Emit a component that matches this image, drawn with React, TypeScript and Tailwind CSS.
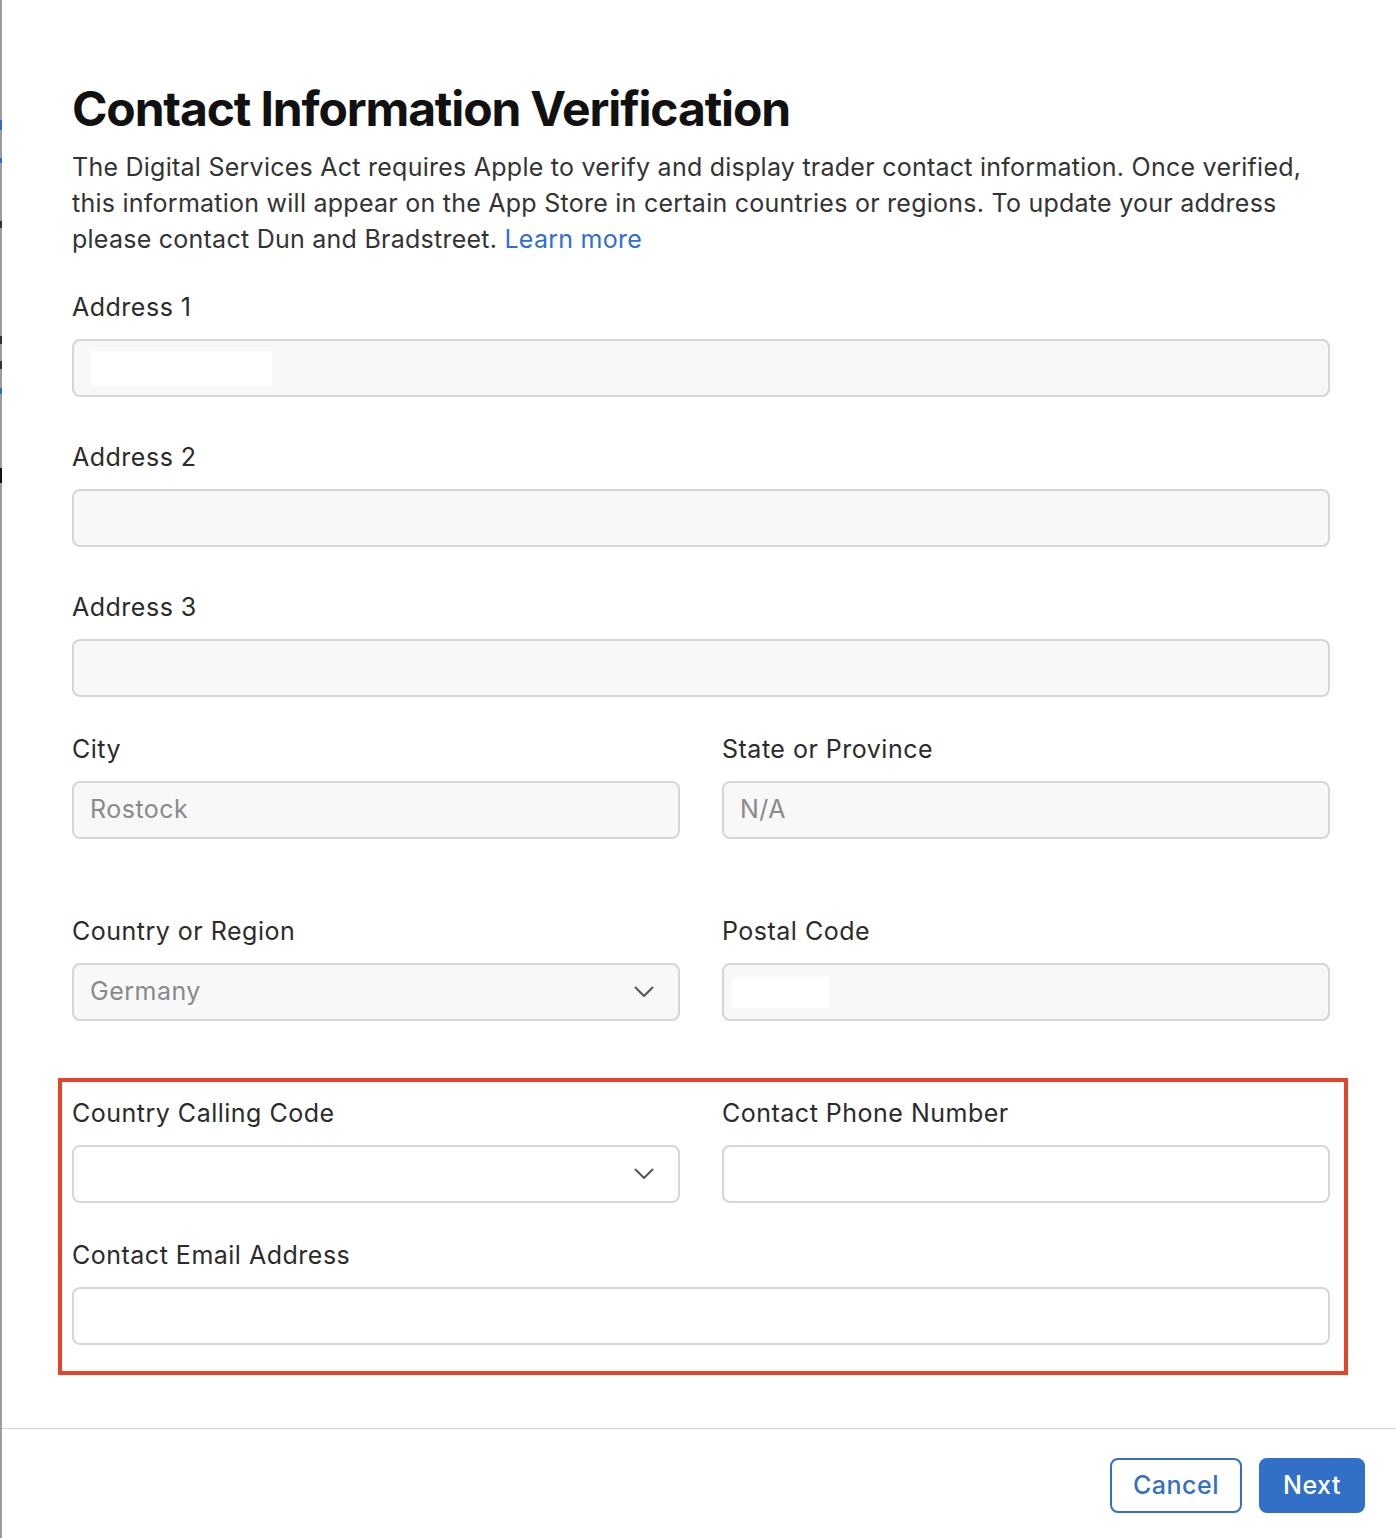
const font = { fontFamily: 'Inter, "Liberation Sans", sans-serif' };

type FieldProps = {
  label: string;
  value?: string;
  disabled?: boolean;
  select?: boolean;
  redact?: string;
  className?: string;
};

function Chevron() {
  return (
    <svg width="20" height="12" viewBox="0 0 20 12" fill="none" className="shrink-0">
      <path d="M1.5 1.5 L10 10 L18.5 1.5" stroke="#555" strokeWidth={2} strokeLinecap="round" strokeLinejoin="round" />
    </svg>
  );
}

function Field({ label, value, disabled, select, redact, className = '' }: FieldProps) {
  return (
    <div className={className}>
      <div className="text-[25px] leading-[32px] tracking-[0.02em] text-[#2b2b2b]">{label}</div>
      <div
        className={`mt-4 flex h-[58px] items-center rounded-[8px] border-2 border-[#d6d6d6] pl-4 pr-6 ${
          disabled ? 'bg-[#f8f8f8]' : 'bg-white'
        }`}
      >
        <div className="flex-1 text-[25px] tracking-[0.02em] text-[#8a8a8a]">
          {value}
          {redact && <div className={`bg-white ${redact}`} />}
        </div>
        {select && <Chevron />}
      </div>
    </div>
  );
}

export default function App() {
  return (
    <div className="flex h-[1538px] w-full bg-white" style={font}>
      <div className="flex w-[2px] flex-col bg-[#9c9c9c]">
        <div className="h-[120px]" />
        <div className="h-[10px] bg-[#2f6fc4]" />
        <div className="h-[28px]" />
        <div className="h-[5px] bg-[#2f6fc4]" />
        <div className="h-[58px]" />
        <div className="h-[7px] bg-[#333]" />
        <div className="h-[108px]" />
        <div className="h-[8px] bg-[#333]" />
        <div className="h-[17px]" />
        <div className="h-[8px] bg-[#333]" />
        <div className="h-[19px]" />
        <div className="h-[6px] bg-[#2f6fc4]" />
        <div className="h-[74px]" />
        <div className="h-[15px] bg-[#111]" />
      </div>

      <div className="flex flex-1 flex-col">
        <div className="pl-[70px] pr-[66px]">
          <h1 className="mt-[85px] text-[48px] font-bold leading-[48px] tracking-[-0.024em] text-[#111]">
            Contact Information Verification
          </h1>
          <p className="mt-4 text-[25px] leading-[36px] tracking-[0.01em] text-[#333]">
            The Digital Services Act requires Apple to verify and display trader contact information. Once verified,
            this information will appear on the App Store in certain countries or regions. To update your address
            please contact Dun and Bradstreet. <span className="text-[#2f6fcf]">Learn more</span>
          </p>

          <Field className="mt-[34px]" label="Address 1" disabled redact="h-[35px] w-[182px]" />
          <Field className="mt-[44px]" label="Address 2" disabled />
          <Field className="mt-[44px]" label="Address 3" disabled />

          <div className="mt-9 grid grid-cols-2 gap-x-[42px]">
            <Field label="City" value="Rostock" disabled />
            <Field label="State or Province" value="N/A" disabled />
          </div>

          <div className="mt-[76px] grid grid-cols-2 gap-x-[42px]">
            <Field label="Country or Region" value="Germany" disabled select />
            <Field label="Postal Code" disabled redact="-ml-2 h-[31px] w-[97px]" />
          </div>

          <div className="relative mt-[76px]">
            <div className="pointer-events-none absolute -top-[19px] -left-[14px] -right-[18px] -bottom-[30px] border-4 border-[#e6432b]" />
            <div className="grid grid-cols-2 gap-x-[42px]">
              <Field label="Country Calling Code" select />
              <Field label="Contact Phone Number" />
            </div>
            <Field className="mt-9" label="Contact Email Address" />
          </div>
        </div>

        <div className="mt-auto flex h-[110px] justify-end gap-[17px] border-t border-[#d2d2d2] pt-[29px] pr-[31px]">
          <button className="h-[55px] w-[132px] rounded-[8px] border-2 border-[#3170c6] bg-white text-[25px] font-medium tracking-[0.02em] text-[#3170c6]">
            Cancel
          </button>
          <button className="h-[55px] w-[106px] rounded-[8px] bg-[#3170c6] text-[25px] font-medium tracking-[0.02em] text-white">
            Next
          </button>
        </div>
      </div>
    </div>
  );
}
